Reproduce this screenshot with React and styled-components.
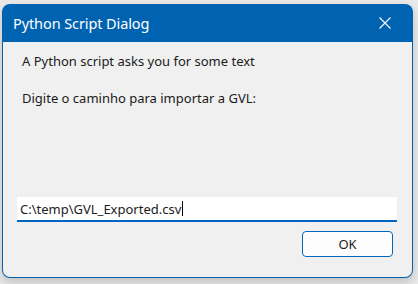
import React from 'react';
import styled, { createGlobalStyle } from 'styled-components';

const GlobalStyle = createGlobalStyle`
  html, body {
    margin: 0;
    padding: 0;
    background: #e9e9e9;
  }
  body {
    font-family: 'Segoe UI', 'Noto Sans', sans-serif;
  }
`;

const Stage = styled.div`
  width: 418px;
  height: 284px;
  padding: 4px 0 0 2px;
  box-sizing: border-box;
`;

const Window = styled.div`
  width: 411px;
  height: 274px;
  display: flex;
  flex-direction: column;
  border-radius: 8px;
  overflow: hidden;
  background: #0063b1;
  box-shadow: 0 4px 10px rgba(0, 0, 0, 0.18);
`;

const TitleBar = styled.div`
  height: 38px;
  flex: none;
  display: flex;
  align-items: center;
  justify-content: space-between;
  padding: 0 0 0 11px;
  color: #ffffff;
`;

const Title = styled.span`
  font-size: 14.5px;
  letter-spacing: -0.1px;
  margin-top: -1px;
`;

const CloseButton = styled.button`
  width: 46px;
  height: 38px;
  border: 0;
  background: transparent;
  display: flex;
  align-items: center;
  justify-content: center;
  padding: 0;
  margin-right: 5px;
`;

const Body = styled.div`
  flex: 1;
  margin: 0 1px 1px 1px;
  background: #f0f0f0;
  border-radius: 0 0 7px 7px;
  display: flex;
  flex-direction: column;
  padding: 11px 15px 20px 14px;
  font-size: 13px;
  color: #1b1b1b;
`;

const Label = styled.p`
  margin: 0 0 ${(p) => p.$gap}px 5px;
  line-height: 17px;
`;

const Input = styled.div`
  margin-top: auto;
  height: 23px;
  background: #ffffff;
  border-bottom: 2px solid #0067c0;
  display: flex;
  align-items: center;
  padding: 0 3px;
  font-size: 13px;
  color: #1b1b1b;
`;

const Caret = styled.span`
  display: inline-block;
  width: 1px;
  height: 15px;
  background: #000;
  margin-left: 1px;
`;

const Footer = styled.div`
  display: flex;
  justify-content: flex-end;
  margin-top: 9px;
  padding-right: 4px;
`;

const Button = styled.button`
  width: 91px;
  height: 26px;
  border: 1px solid #0067c0;
  border-radius: 4px;
  background: #fdfdfd;
  font-family: 'Segoe UI', 'Noto Sans', sans-serif;
  font-size: 13px;
  color: #1b1b1b;
  padding: 0;
`;

const App = () => {
  return (
    <Stage>
      <GlobalStyle />
      <Window>
        <TitleBar>
          <Title>Python Script Dialog</Title>
          <CloseButton aria-label="Close">
            <svg width="12" height="12" viewBox="0 0 12 12">
              <path d="M0.5 0.5 L11.5 11.5 M11.5 0.5 L0.5 11.5" stroke="#fff" strokeWidth="1.1" />
            </svg>
          </CloseButton>
        </TitleBar>
        <Body>
          <Label $gap={20}>A Python script asks you for some text</Label>
          <Label $gap={0}>Digite o caminho para importar a GVL:</Label>
          <Input>
            C:\temp\GVL_Exported.csv<Caret />
          </Input>
          <Footer>
            <Button>OK</Button>
          </Footer>
        </Body>
      </Window>
    </Stage>
  );
};

export default App;
